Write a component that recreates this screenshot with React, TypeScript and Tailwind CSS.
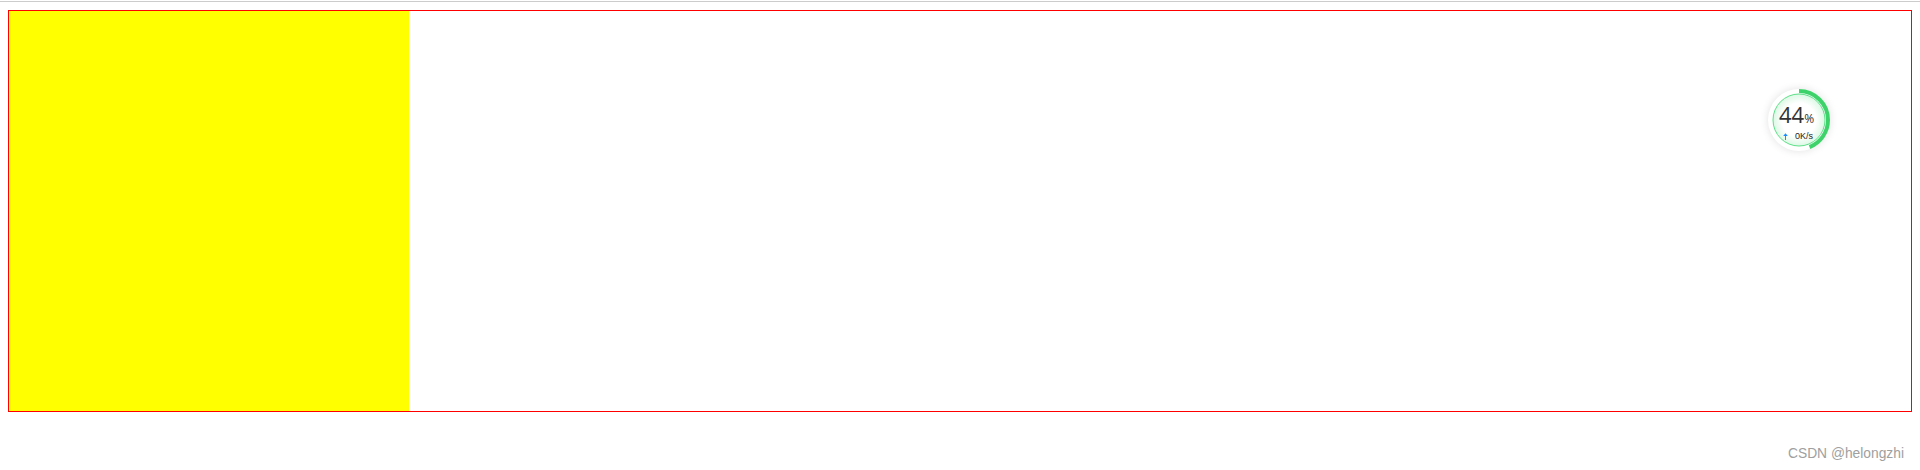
import React from "react";

export default function App() {
  const r = 29;
  const c = 2 * Math.PI * r;
  const pct = 0.44;
  return (
    <div className="relative w-[1920px] h-[470px] bg-white" style={{ fontFamily: '"Liberation Sans", Arial, sans-serif' }}>
      <div className="pt-px">
        <div className="h-px bg-[#cccccc]" />
      </div>
      <div className="relative mt-[8px] ml-[8px] w-[1904px] h-[402px] border border-[#ff0000]">
        <div className="w-[400px] h-[400px] bg-[#ffff00]" />
        <div className="absolute left-[1759px] top-[78px] w-[62px] h-[62px] rounded-full bg-white shadow-[0_0_8px_rgba(0,0,0,0.12)]">
          <svg className="absolute -left-[1px] -top-[1px]" width="64" height="64" viewBox="0 0 64 64">
            <defs>
              <radialGradient id="g" cx="50%" cy="50%" r="50%">
                <stop offset="65%" stopColor="#ffffff" />
                <stop offset="100%" stopColor="#dcf8e4" />
              </radialGradient>
            </defs>
            <circle cx="32" cy="32" r="26" fill="url(#g)" stroke="#5fe08a" strokeWidth="1" />
            <circle
              cx="32"
              cy="32"
              r={r}
              fill="none"
              stroke="#3ed36a"
              strokeWidth="4"
              strokeDasharray={`${c * pct} ${c}`}
              transform="rotate(-90 32 32)"
            />
          </svg>
          <div className="absolute inset-0 flex flex-col items-center pt-[15px]">
            <div className="flex items-baseline h-[20px] leading-[20px] text-[#333333] -ml-[5px]" style={{ fontFamily: '"Open Sans", sans-serif' }}>
              <span className="text-[22px] leading-[20px] font-normal">44</span>
              <span className="text-[12px] leading-[20px]">%</span>
            </div>
            <div className="flex items-center mt-[7px] h-[10px] leading-[10px] -ml-[2px]">
              <svg width="5" height="7" viewBox="0 0 5 7" className="mr-[7px]">
                <path d="M2.5 0.3 L4.8 3 L3 3 L3 7 L2 7 L2 3 L0.2 3 Z" fill="#1a8cff" />
              </svg>
              <span className="text-[9px] leading-[10px] text-[#222222]">0K/s</span>
            </div>
          </div>
        </div>
      </div>
      <div className="flex justify-end pr-[16px] mt-[34px]">
        <span className="text-[13.8px] leading-[16px] text-[#a0a0a0]">CSDN @helongzhi</span>
      </div>
    </div>
  );
}
